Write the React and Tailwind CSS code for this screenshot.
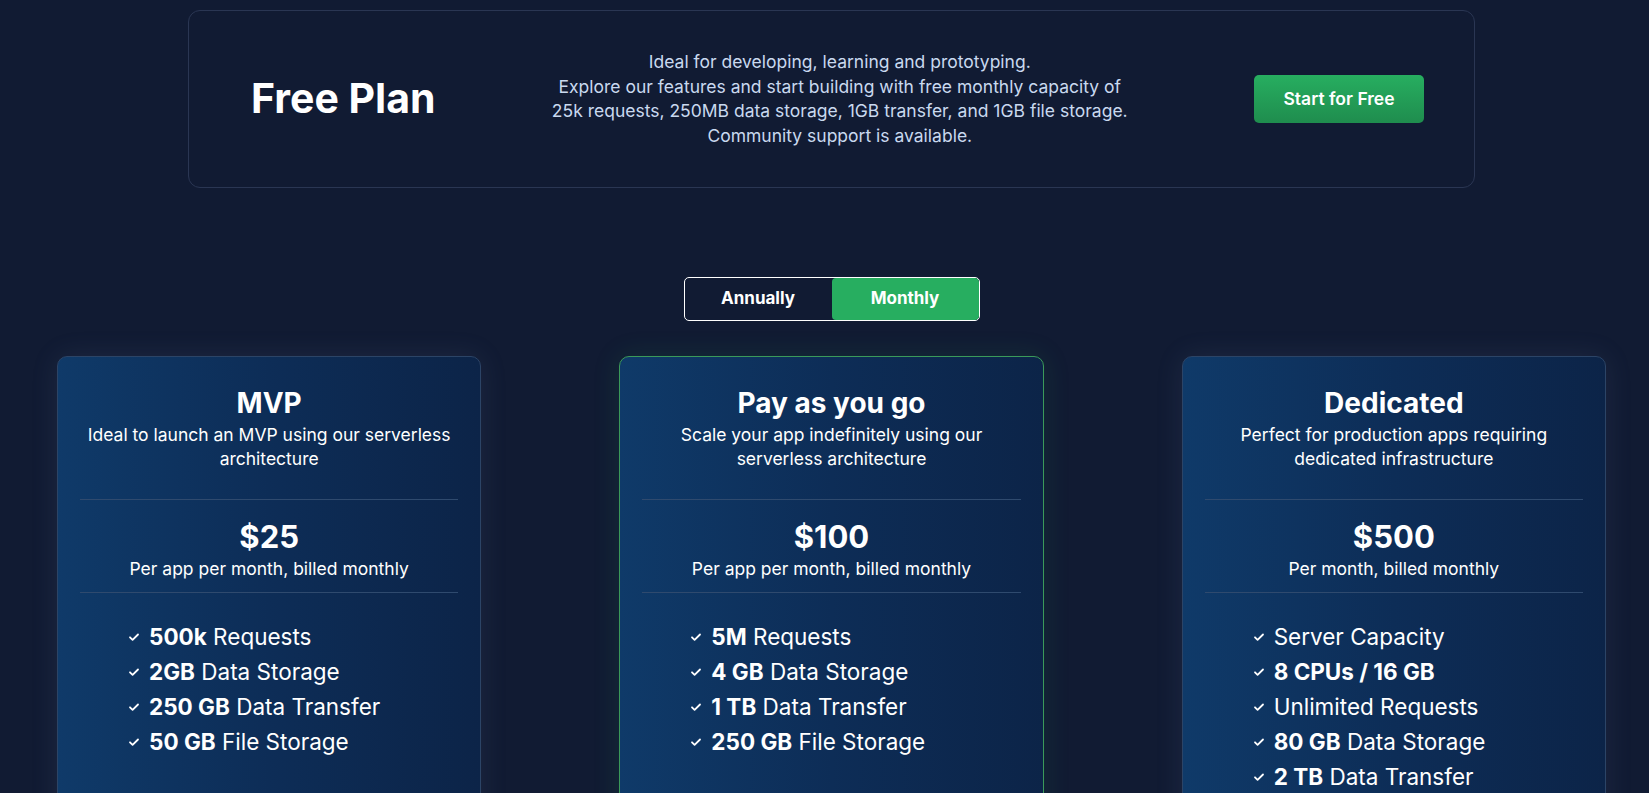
import React from 'react'

const plans = [
    {
        name: 'MVP',
        blurb: ['Ideal to launch an MVP using our serverless', 'architecture'],
        price: '$25',
        note: 'Per app per month, billed monthly',
        features: [
            ['500k', ' Requests'],
            ['2GB', ' Data Storage'],
            ['250 GB', ' Data Transfer'],
            ['50 GB', ' File Storage'],
        ],
    },
    {
        name: 'Pay as you go',
        blurb: ['Scale your app indefinitely using our', 'serverless architecture'],
        price: '$100',
        note: 'Per app per month, billed monthly',
        featured: true,
        features: [
            ['5M', ' Requests'],
            ['4 GB', ' Data Storage'],
            ['1 TB', ' Data Transfer'],
            ['250 GB', ' File Storage'],
        ],
    },
    {
        name: 'Dedicated',
        blurb: ['Perfect for production apps requiring', 'dedicated infrastructure'],
        price: '$500',
        note: 'Per month, billed monthly',
        features: [
            ['', 'Server Capacity'],
            ['8 CPUs / 16 GB', ''],
            ['', 'Unlimited Requests'],
            ['80 GB', ' Data Storage'],
            ['2 TB', ' Data Transfer'],
        ],
    },
]

function Check() {
    return (
        <svg className="w-[12px] h-[12px] shrink-0" viewBox="0 0 12 12" fill="none" stroke="currentColor">
            <path d="M2 6.3l2.6 2.6L10 3.5" strokeWidth={1.8} strokeLinecap="round" strokeLinejoin="round" />
        </svg>
    )
}

function PlanCard({ plan }) {
    return (
        <div
            className={
                'h-[480px] rounded-[10px] border bg-gradient-to-r from-[#0f3a69] via-[#0d2d57] to-[#0c2448] ' +
                (plan.featured
                    ? 'border-[#3b9a5a] shadow-[0_0_28px_rgba(46,160,90,0.14)]'
                    : 'border-[#2c4466] shadow-[0_0_28px_rgba(120,140,180,0.12)]')
            }
        >
            <div className="pt-7 text-center">
                <h3 className="text-[28px] leading-[36px] font-bold">{plan.name}</h3>
                <p className="mt-0.5 text-[17.5px] leading-6">
                    {plan.blurb[0]}
                    <br />
                    {plan.blurb[1]}
                </p>
            </div>
            <div className="mx-[22px] mt-7 border-t border-[#2f4a6e]" />
            <div className="text-center mt-[19px]">
                <div className="text-[31px] leading-9 font-bold">{plan.price}</div>
                <div className="mt-[2px] text-[17.5px] leading-6">{plan.note}</div>
            </div>
            <div className="mx-[22px] mt-[11px] border-t border-[#2f4a6e]" />
            <ul className="mt-[26px] pl-[70px]">
                {plan.features.map(([bold, rest], i) => (
                    <li key={i} className="flex items-center h-[35px] text-[22.5px]">
                        <Check />
                        <span className="ml-[9px]">
                            {bold && <b className="font-bold">{bold}</b>}
                            {rest}
                        </span>
                    </li>
                ))}
            </ul>
        </div>
    )
}

export default function App() {
    return (
        <div className="min-h-screen h-[793px] overflow-hidden bg-[#111b33] text-white font-['Inter',sans-serif]">
            <div className="ml-[57px] w-[1549px] pt-[10px]">
                {/* Free plan banner */}
                <div className="mx-[131px] h-[178px] rounded-[12px] border border-[#2a3653] flex items-center justify-between pl-[62px] pr-[50px]">
                    <h2 className="text-[41px] font-bold">Free Plan</h2>
                    <p className="mr-[10px] text-center text-[17.5px] leading-[24.5px] text-[#c9d9ef]">
                        Ideal for developing, learning and prototyping.
                        <br />
                        Explore our features and start building with free monthly capacity of
                        <br />
                        25k requests, 250MB data storage, 1GB transfer, and 1GB file storage.
                        <br />
                        Community support is available.
                    </p>
                    <button
                        type="button"
                        className="w-[170px] h-[48px] rounded-[5px] bg-gradient-to-b from-[#27ae60] to-[#1f8d4e] text-[17.5px] font-semibold"
                    >
                        Start for Free
                    </button>
                </div>

                {/* Billing toggle */}
                <div className="flex justify-center mt-[89px]">
                    <div className="flex w-[296px] h-[44px] rounded-[5px] border border-white overflow-hidden">
                        <button type="button" className="flex-1 text-[17px] font-bold">Annually</button>
                        <button type="button" className="flex-1 rounded-[4px] bg-[#27ae60] text-[17px] font-bold">Monthly</button>
                    </div>
                </div>

                {/* Plans */}
                <div className="grid grid-cols-3 gap-[138px] mt-[35px]">
                    {plans.map((p) => (
                        <PlanCard key={p.name} plan={p} />
                    ))}
                </div>
            </div>
        </div>
    )
}
